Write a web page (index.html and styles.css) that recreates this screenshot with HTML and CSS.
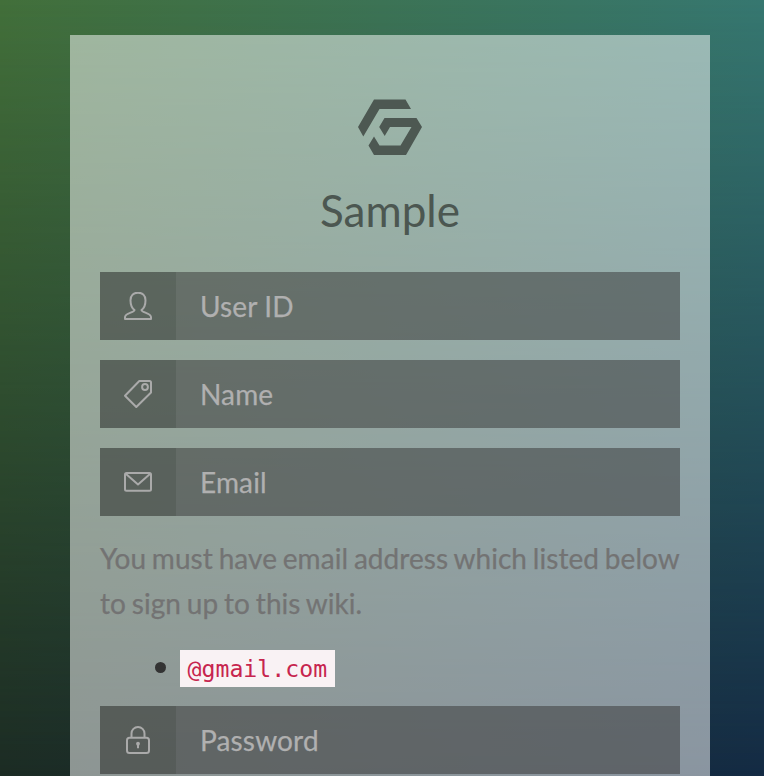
FILE: index.html
```html
<!DOCTYPE html>
<html lang="en">
<head>
<meta charset="utf-8">
<title>Sample</title>
<link rel="stylesheet" href="styles.css">
</head>
<body>
<main class="panel">
  <header class="brand">
    <svg class="logo" width="64" height="56" viewBox="0 0 64 56">
      <path d="M16 .5H47.500L53 10H21.500L5.300 37.500L0 28Z"/>
      <path d="M26.500 19H58.500L64 28L48 56H16L10.500 46.500L16 37.500L21.500 46.500H42.500L53.500 28H32L26.700 37L21.200 28Z"/>
    </svg>
    <h1 class="title">Sample</h1>
  </header>
  <form class="form">
    <label class="field">
      <span class="addon"><svg class="icon" viewBox="0 0 28 28"><path d="M10.500 18C6.900 15.400 6.500 12 6.500 8.200C6.500 3.500 9.500 .7 14 .7S21.500 3.500 21.500 8.200C21.500 12 21.100 15.400 17.500 18C17.500 20.500 27 21 27 25V27H1V25C1 21 10.500 20.500 10.500 18Z"/></svg></span>
      <input class="input" type="text" placeholder="User ID">
    </label>
    <label class="field">
      <span class="addon"><svg class="icon" viewBox="0 0 28 28"><path d="M15.300 1H25.500Q27 1 27 2.500V12.500L12.300 27L1 15.700Z"/><circle cx="21" cy="7" r="2.900"/></svg></span>
      <input class="input" type="text" placeholder="Name">
    </label>
    <label class="field">
      <span class="addon"><svg class="icon" viewBox="0 0 28 28"><rect x="1" y="5" width="26" height="17.800" rx="1.500"/><path d="M1.500 5.500L14 16.500L26.500 5.500"/></svg></span>
      <input class="input" type="text" placeholder="Email">
    </label>
    <p class="help">You must have email address which listed below to sign up to this wiki.</p>
    <ul class="domains"><li class="domain"><code class="code">@gmail.com</code></li></ul>
    <label class="field">
      <span class="addon"><svg class="icon" viewBox="0 0 28 28"><rect x="3" y="11.800" width="22" height="15.200" rx="2.500"/><path d="M7.500 11.500V7.500a6.500 6.500 0 0 1 13 0V11.500"/><circle class="keyhole" cx="14" cy="17.700" r="1.900"/><path d="M14 18V22.300"/></svg></span>
      <input class="input" type="password" placeholder="Password">
    </label>
  </form>
</main>
</body>
</html>
```
FILE: styles.css
```css
* { box-sizing: border-box; }

html { height: 100%; }

body {
  height: 100%;
  margin: 0;
  padding: 35px 54px 0 70px;
  overflow: hidden;
  background: linear-gradient(90deg, #1c2c24, #142b44);
  font-family: Lato, sans-serif;
  font-size: 28px;
  color: #333;
}

body::before {
  content: "";
  position: absolute;
  inset: 0;
  z-index: -1;
  background: linear-gradient(90deg, #426f3a, #367770);
  -webkit-mask-image: linear-gradient(#000, transparent);
  mask-image: linear-gradient(#000, transparent);
}

.panel {
  height: 741px;
  padding: 64px 30px 0;
  overflow: hidden;
  background: rgba(255, 255, 255, .5);
}

.brand {
  display: flex;
  flex-direction: column;
  align-items: center;
  height: 173px;
}

.logo { fill: #4d5852; }

.title {
  margin: 29px 0 0;
  font-size: 44px;
  line-height: 52px;
  font-weight: 400;
  color: #4c5751;
}

.field {
  display: flex;
  height: 68px;
  margin-bottom: 20px;
  background: rgba(51, 51, 51, .5);
}

.field:last-child { margin-bottom: 0; }

.addon {
  display: flex;
  justify-content: center;
  align-items: center;
  width: 76px;
  background: rgba(40, 48, 38, .16);
}

.icon {
  width: 28px;
  height: 28px;
  fill: none;
  stroke: #aaa;
  stroke-width: 2;
  stroke-linejoin: round;
}

.keyhole {
  fill: #aaa;
  stroke: none;
}

.input {
  flex: 1;
  min-width: 0;
  padding: 0 24px;
  border: 0;
  outline: 0;
  background: transparent;
  font: inherit;
  letter-spacing: .15px;
  color: #b0b0b0;
}

.input::placeholder {
  color: #b0b0b0;
  opacity: 1;
}

.input,
.help {
  -webkit-text-stroke: .25px currentColor;
}

.help {
  margin: 0 -4px 24px 0;
  line-height: 45px;
  letter-spacing: .05px;
  word-spacing: -1.400px;
  color: #737373;
}

.domains {
  margin: 0 0 19px;
  padding: 0 0 0 55px;
  list-style: none;
}

.domain {
  display: flex;
  align-items: center;
  height: 37px;
}

.domain::before {
  content: "";
  width: 11px;
  height: 11px;
  margin: 0 14px 2px 0;
  border-radius: 50%;
  background: #333;
}

.code {
  padding: 0 7.500px;
  background: #f9f2f4;
  color: #c7254e;
  font-family: "DejaVu Sans Mono", monospace;
  font-size: 23.200px;
  line-height: 37px;
}
```
